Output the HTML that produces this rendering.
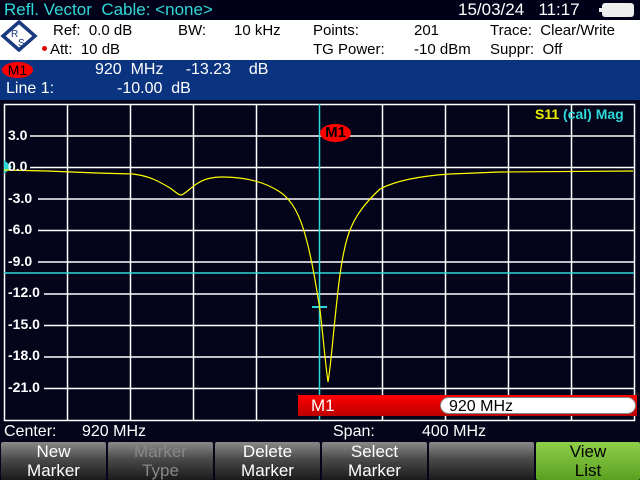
<!DOCTYPE html><html><head><style>
*{margin:0;padding:0}
body{width:640px;height:480px;background:#04041a;font-family:"Liberation Sans",sans-serif;position:relative;overflow:hidden;color:#fff}
.a{position:absolute;white-space:nowrap}
.sk{position:absolute;top:442px;height:38px;width:105px;background:linear-gradient(#8a8a8a,#4a4a4a 45%,#1a1a1a);text-align:center;font-size:17px;line-height:19px;color:#fff;border-radius:2px}
.k{font-size:15px;color:#000}
.yl{font-size:14px;font-weight:bold;color:#fff}
</style></head><body>
<div class="a" style="left:0;top:0;width:640px;height:20px;background:#000018"></div>
<div class="a" style="left:4px;top:0px;font-size:17px;color:#2fd8d8">Refl. Vector&nbsp; Cable: &lt;none&gt;</div>
<div class="a" style="left:458px;top:0px;font-size:17px;color:#fff">15/03/24&nbsp;&nbsp; 11:17</div>
<div class="a" style="left:602px;top:3px;width:32px;height:14px;background:#eee;border-radius:3px"></div>
<div class="a" style="left:599px;top:8px;width:3px;height:4px;background:#eee"></div>
<div class="a" style="left:0;top:20px;width:640px;height:40px;background:#fff"></div>
<svg class="a" style="left:0;top:20px" width="40" height="32"><polygon points="19,2 35,16 19,30 3,16" fill="none" stroke="#1a3a80" stroke-width="3.5"/><text x="11" y="17" font-size="10" fill="#1a3a80" font-family="Liberation Sans">R</text><text x="18" y="26" font-size="10" fill="#1a3a80" font-family="Liberation Sans">S</text></svg>
<div class="a" style="left:42px;top:46px;width:5px;height:5px;border-radius:50%;background:#d00"></div>
<div class="a k" style="left:53px;top:22px">Ref:&nbsp; 0.0 dB</div>
<div class="a k" style="left:50px;top:41px">Att:&nbsp; 10 dB</div>
<div class="a k" style="left:178px;top:22px">BW:</div>
<div class="a k" style="left:234px;top:22px">10 kHz</div>
<div class="a k" style="left:313px;top:22px">Points:</div>
<div class="a k" style="left:313px;top:41px">TG Power:</div>
<div class="a k" style="left:414px;top:22px">201</div>
<div class="a k" style="left:414px;top:41px">-10 dBm</div>
<div class="a k" style="left:490px;top:22px">Trace:&nbsp; Clear/Write</div>
<div class="a k" style="left:490px;top:41px">Suppr:&nbsp; Off</div>
<div class="a" style="left:0;top:60px;width:640px;height:40px;background:#0a3380"></div>
<div class="a" style="left:2px;top:62px;width:31px;height:16px;border-radius:50%;background:#f00;color:#000;font-size:14px;text-align:center;line-height:16px">M1</div>
<div class="a" style="left:95px;top:61px;font-size:16px">920&nbsp; MHz&nbsp;&nbsp;&nbsp;&nbsp; -13.23&nbsp;&nbsp;&nbsp; dB</div>
<div class="a" style="left:6px;top:80px;font-size:16px">Line 1:</div>
<div class="a" style="left:117px;top:80px;font-size:16px">-10.00&nbsp; dB</div>
<svg class="a" style="left:0;top:0" width="640" height="480">
<g stroke="#fff" stroke-width="1.5" fill="none">
<rect x="4.5" y="104.5" width="630" height="316"/>
<path d="M67.5 104V420M130.5 104V420M193.5 104V420M256.5 104V420M382.5 104V420M445.5 104V420M508.5 104V420M571.5 104V420"/>
<path d="M30 136H634M30 167.5H634M38 199H634M38 230.5H634M38 262H634M44 294H634M44 325.5H634M44 357H634M44 388.5H634"/>
</g>
<path d="M4 273H634M319.5 104V420" stroke="#2fd8d8" stroke-width="1.5"/>
<path d="M312 307H327" stroke="#2fd8d8" stroke-width="2"/>
<polygon points="4,160 12,167 4,174" fill="#2fd8d8"/>
<path fill="none" stroke="#ff0" stroke-width="1.2" d="M4 170 L47 171 L97 173 L133 174 C150 176 160 182 170 188 C176 192 178 195 181 195 C184 195 190 188 198 183 C206 178 214 177 222 177 C240 177 262 180 280 192 C292 200 300 215 306 238 C312 260 316 285 320 310 C323 335 325 360 328 382 C331 365 333 335 337 300 C340 270 344 245 350 230 C356 215 365 203 380 189 C395 181 420 176 450 174 L500 172 L633 171"/>
</svg>
<div class="a yl" style="left:8px;top:127px">3.0</div>
<div class="a yl" style="left:8px;top:158px">0.0</div>
<div class="a yl" style="left:8px;top:190px">-3.0</div>
<div class="a yl" style="left:8px;top:221px">-6.0</div>
<div class="a yl" style="left:8px;top:253px">-9.0</div>
<div class="a yl" style="left:8px;top:284px">-12.0</div>
<div class="a yl" style="left:8px;top:316px">-15.0</div>
<div class="a yl" style="left:8px;top:347px">-18.0</div>
<div class="a yl" style="left:8px;top:379px">-21.0</div>
<div class="a" style="left:535px;top:106px;font-size:14px;font-weight:bold;color:#2fd8d8"><span style="color:#ee0">S11</span> (cal) Mag</div>
<div class="a" style="left:320px;top:124px;width:31px;height:18px;border-radius:50%;background:#f00;color:#000;font-size:15px;font-weight:bold;text-align:center;line-height:18px">M1</div>
<div class="a" style="left:298px;top:395px;width:339px;height:21px;background:linear-gradient(#f00,#b00)"></div>
<div class="a" style="left:311px;top:396px;font-size:17px">M1</div>
<div class="a" style="left:440px;top:397px;width:196px;height:17px;background:#fff;border-radius:9px;border:1px solid #888;color:#000;font-size:16px;line-height:17px;padding-left:8px;box-sizing:border-box">920 MHz</div>
<div class="a" style="left:4px;top:423px;font-size:16px">Center:</div>
<div class="a" style="left:82px;top:423px;font-size:16px">920 MHz</div>
<div class="a" style="left:333px;top:423px;font-size:16px">Span:</div>
<div class="a" style="left:422px;top:423px;font-size:16px">400 MHz</div>
<div class="sk" style="left:1px">New<br>Marker</div>
<div class="sk" style="left:108px;color:#888">Marker<br>Type</div>
<div class="sk" style="left:215px">Delete<br>Marker</div>
<div class="sk" style="left:322px">Select<br>Marker</div>
<div class="sk" style="left:429px"></div>
<div class="sk" style="left:536px;width:104px;background:linear-gradient(#8fd04a,#5aa020);color:#000">View<br>List</div>
</body></html>
